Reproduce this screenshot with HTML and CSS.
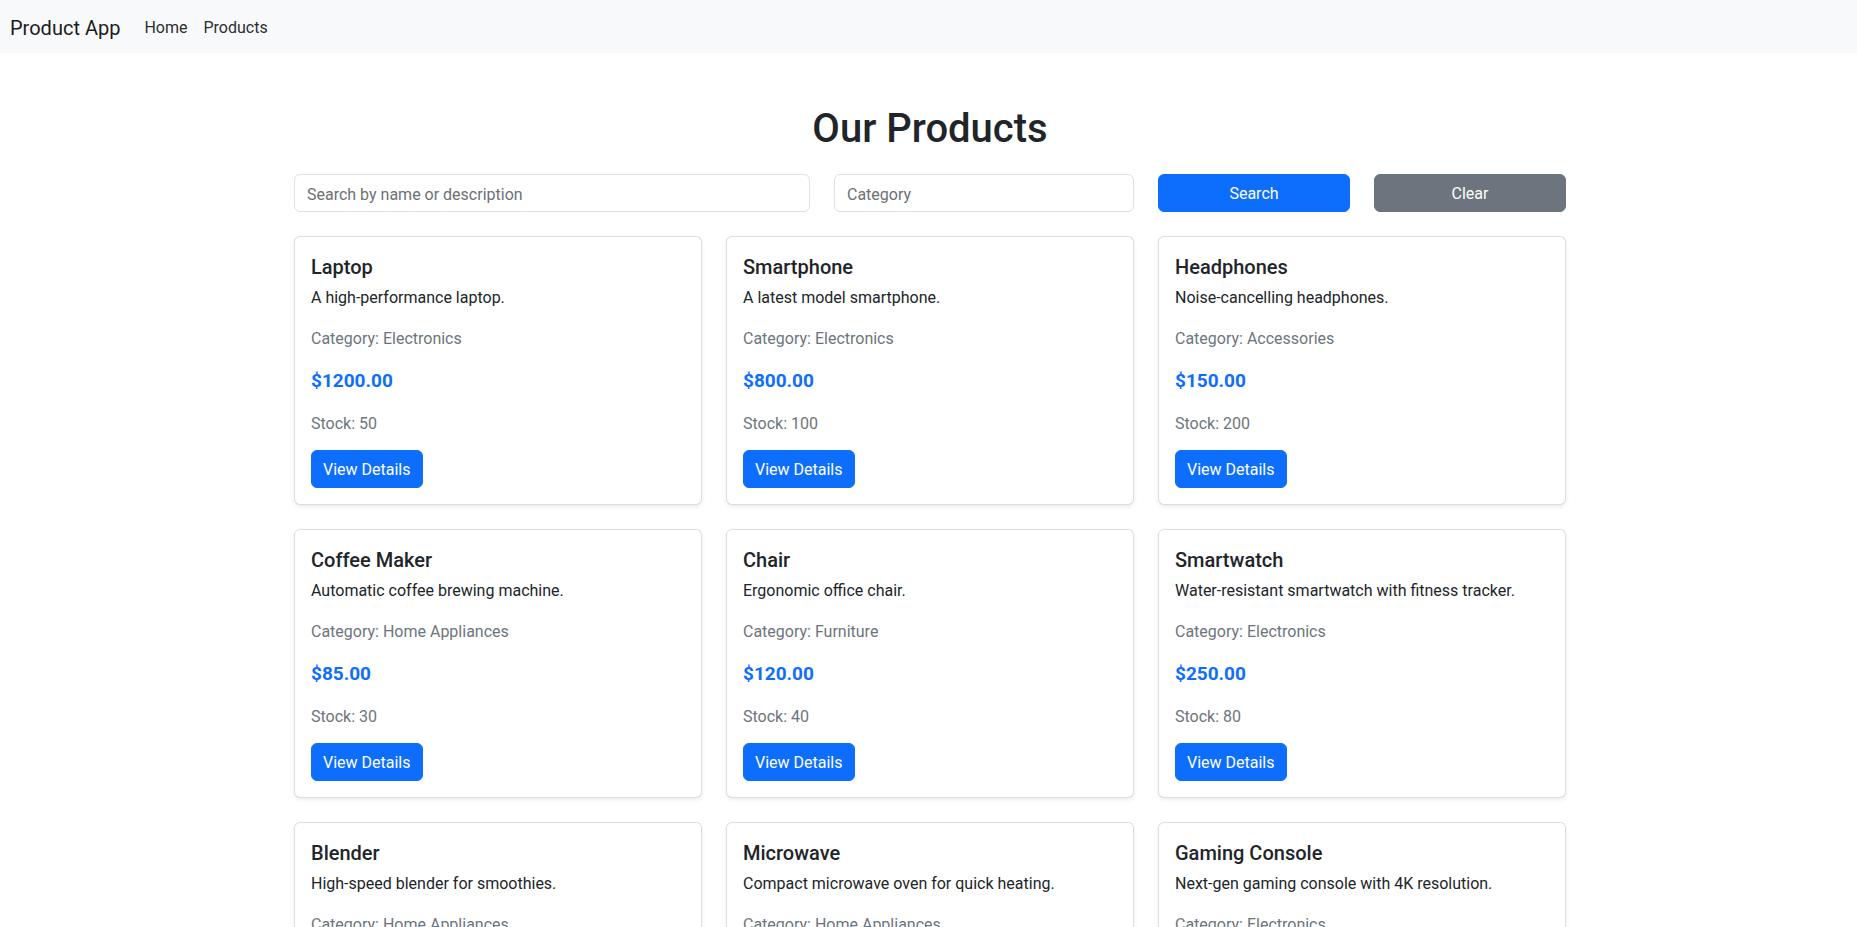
FILE: index.html
```html
<!DOCTYPE html>
<html lang="en">
<head>
<meta charset="utf-8">
<title>Product App</title>
<link rel="stylesheet" href="styles.css">
</head>
<body>
<nav class="navbar">
  <a class="brand" href="#">Product App</a>
  <ul class="nav">
    <li><a class="nav-link" href="#">Home</a></li>
    <li><a class="nav-link" href="#">Products</a></li>
  </ul>
</nav>

<main class="container">
  <h1 class="page-title">Our Products</h1>

  <form class="filters">
    <input class="field" type="text" placeholder="Search by name or description">
    <input class="field" type="text" placeholder="Category">
    <button class="btn btn-primary btn-block" type="button">Search</button>
    <button class="btn btn-secondary btn-block" type="button">Clear</button>
  </form>

  <div class="grid">
    <div class="card"><div class="card-body">
      <h5 class="card-title">Laptop</h5>
      <p class="desc">A high-performance laptop.</p>
      <p class="muted">Category: Electronics</p>
      <p class="price">$1200.00</p>
      <p class="muted stock">Stock: 50</p>
      <a class="btn btn-primary" href="#">View Details</a>
    </div></div>

    <div class="card"><div class="card-body">
      <h5 class="card-title">Smartphone</h5>
      <p class="desc">A latest model smartphone.</p>
      <p class="muted">Category: Electronics</p>
      <p class="price">$800.00</p>
      <p class="muted stock">Stock: 100</p>
      <a class="btn btn-primary" href="#">View Details</a>
    </div></div>

    <div class="card"><div class="card-body">
      <h5 class="card-title">Headphones</h5>
      <p class="desc">Noise-cancelling headphones.</p>
      <p class="muted">Category: Accessories</p>
      <p class="price">$150.00</p>
      <p class="muted stock">Stock: 200</p>
      <a class="btn btn-primary" href="#">View Details</a>
    </div></div>

    <div class="card"><div class="card-body">
      <h5 class="card-title">Coffee Maker</h5>
      <p class="desc">Automatic coffee brewing machine.</p>
      <p class="muted">Category: Home Appliances</p>
      <p class="price">$85.00</p>
      <p class="muted stock">Stock: 30</p>
      <a class="btn btn-primary" href="#">View Details</a>
    </div></div>

    <div class="card"><div class="card-body">
      <h5 class="card-title">Chair</h5>
      <p class="desc">Ergonomic office chair.</p>
      <p class="muted">Category: Furniture</p>
      <p class="price">$120.00</p>
      <p class="muted stock">Stock: 40</p>
      <a class="btn btn-primary" href="#">View Details</a>
    </div></div>

    <div class="card"><div class="card-body">
      <h5 class="card-title">Smartwatch</h5>
      <p class="desc">Water-resistant smartwatch with fitness tracker.</p>
      <p class="muted">Category: Electronics</p>
      <p class="price">$250.00</p>
      <p class="muted stock">Stock: 80</p>
      <a class="btn btn-primary" href="#">View Details</a>
    </div></div>

    <div class="card"><div class="card-body">
      <h5 class="card-title">Blender</h5>
      <p class="desc">High-speed blender for smoothies.</p>
      <p class="muted">Category: Home Appliances</p>
      <p class="price">$60.00</p>
      <p class="muted stock">Stock: 25</p>
      <a class="btn btn-primary" href="#">View Details</a>
    </div></div>

    <div class="card"><div class="card-body">
      <h5 class="card-title">Microwave</h5>
      <p class="desc">Compact microwave oven for quick heating.</p>
      <p class="muted">Category: Home Appliances</p>
      <p class="price">$150.00</p>
      <p class="muted stock">Stock: 20</p>
      <a class="btn btn-primary" href="#">View Details</a>
    </div></div>

    <div class="card"><div class="card-body">
      <h5 class="card-title">Gaming Console</h5>
      <p class="desc">Next-gen gaming console with 4K resolution.</p>
      <p class="muted">Category: Electronics</p>
      <p class="price">$500.00</p>
      <p class="muted stock">Stock: 15</p>
      <a class="btn btn-primary" href="#">View Details</a>
    </div></div>
  </div>
</main>
</body>
</html>
```
FILE: styles.css
```css
* { box-sizing: border-box; }

html, body { margin: 0; padding: 0; }

body {
  font-family: Roboto, "Liberation Sans", sans-serif;
  font-size: 16px;
  line-height: 24px;
  color: #212529;
  background: #ffffff;
}

/* ---------- navbar ---------- */
.navbar {
  height: 53px;
  background: #f8f9fa;
  display: flex;
  align-items: center;
  padding: 8px 12px 5px 10px;
}

.brand {
  font-size: 20px;
  line-height: 30px;
  padding: 5px 0;
  margin-right: 16px;
  color: #1b1c1d;
  text-decoration: none;
}

.nav {
  display: flex;
  list-style: none;
  margin: 0;
  padding: 0;
}

.nav-link {
  display: block;
  padding: 8px 8px;
  font-size: 16px;
  line-height: 24px;
  color: #2b2e31;
  text-decoration: none;
}

/* ---------- page ---------- */
.container {
  max-width: 1275px;
  margin: 0 auto;
  padding: 0 0 40px 3px;
}

.page-title {
  margin: 52px 0 21px;
  font-size: 40px;
  line-height: 48px;
  font-weight: 500;
  text-align: center;
  color: #212529;
}

/* ---------- filters ---------- */
.filters {
  display: grid;
  grid-template-columns: 43fr 25fr 16fr 16fr;
  column-gap: 24px;
  margin: 0 0 24px;
}

.field {
  height: 38px;
  padding: 7px 12px 5px;
  font-family: inherit;
  font-size: 16px;
  line-height: 24px;
  color: #212529;
  background: #fff;
  border: 1px solid #dee2e6;
  border-radius: 6px;
  outline: none;
}

.field::placeholder { color: #6c7075; opacity: 1; }

/* ---------- buttons ---------- */
.btn {
  display: inline-block;
  padding: 7px 11px 5px;
  font-family: inherit;
  font-size: 16px;
  line-height: 24px;
  font-weight: 400;
  text-align: center;
  text-decoration: none;
  color: #fff;
  border: 1px solid transparent;
  border-radius: 6px;
  cursor: pointer;
}

.btn-block { display: block; width: 100%; height: 38px; }

.btn-primary { background: #0d6efd; border-color: #0d6efd; }
.btn-secondary { background: #6c757d; border-color: #6c757d; }

/* ---------- cards ---------- */
.grid {
  display: grid;
  grid-template-columns: repeat(3, 1fr);
  gap: 24px;
}

.card {
  background: #fff;
  border: 1px solid rgba(0, 0, 0, 0.13);
  border-radius: 6px;
  box-shadow: 0 2px 4px rgba(0, 0, 0, 0.075);
}

.card-body {
  padding: 18px 16px 16px;
}

.card-title {
  margin: 0 0 7px;
  font-size: 20px;
  line-height: 24px;
  font-weight: 500;
  color: #212529;
}

.desc {
  margin: 0 0 17px;
  font-size: 16px;
  line-height: 24px;
  color: #212529;
}

.muted {
  margin: 0 0 16px;
  color: #6c757d;
}

.price {
  margin: 0 0 17px;
  font-size: 19px;
  line-height: 28px;
  font-weight: 700;
  color: #0d6efd;
}

.stock { margin-bottom: 14px; }
```
